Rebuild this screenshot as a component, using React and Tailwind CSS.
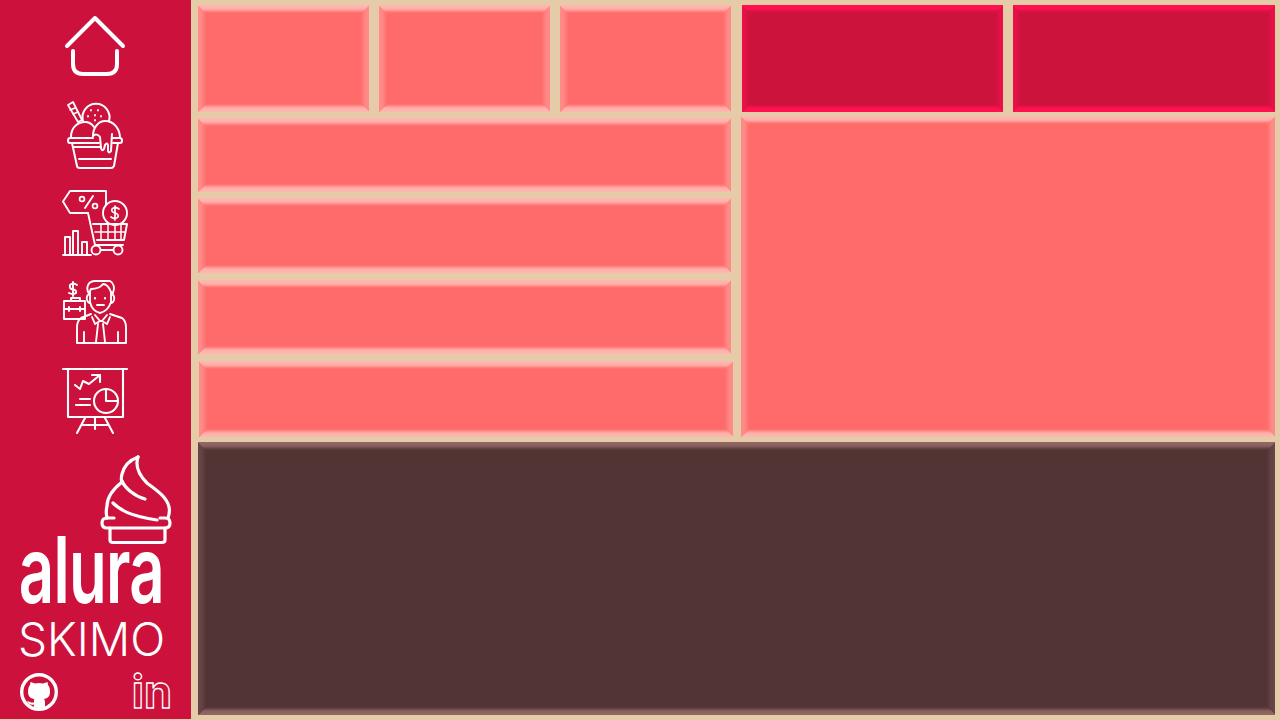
const light = "bg-[#ff6b6b] shadow-[inset_0_1px_0_#ffb6af,inset_1px_0_0_#ff8c8a,inset_0_-1px_0_#ffb6af,inset_-1px_0_0_#ff8c8a,inset_0_2px_0_#ffb5ae,inset_2px_0_0_#ff8b89,inset_0_-2px_0_#ffb5ae,inset_-2px_0_0_#ff8b89,inset_0_3px_0_#ffb3ac,inset_3px_0_0_#ff8987,inset_0_-3px_0_#ffb3ac,inset_-3px_0_0_#ff8987,inset_0_4px_0_#ffafa9,inset_4px_0_0_#ff8785,inset_0_-4px_0_#ffafa9,inset_-4px_0_0_#ff8785,inset_0_5px_0_#ffa8a2,inset_5px_0_0_#ff8381,inset_0_-5px_0_#ffa8a2,inset_-5px_0_0_#ff8381,inset_0_6px_0_#ff9591,inset_6px_0_0_#ff7c7b,inset_0_-6px_0_#ff9591,inset_-6px_0_0_#ff7c7b,inset_0_7px_0_#ff827f,inset_7px_0_0_#ff7675,inset_0_-7px_0_#ff827f,inset_-7px_0_0_#ff7675,inset_0_8px_0_#ff7473,inset_8px_0_0_#ff7170,inset_0_-8px_0_#ff7473,inset_-8px_0_0_#ff7170]";
const pink = "bg-[#cb133b] shadow-[inset_0_1px_0_#ff1150,inset_1px_0_0_#e81148,inset_0_-1px_0_#ff1150,inset_-1px_0_0_#e81148,inset_0_2px_0_#ff1150,inset_2px_0_0_#e81148,inset_0_-2px_0_#ff1150,inset_-2px_0_0_#e81148,inset_0_3px_0_#ff1150,inset_3px_0_0_#e61147,inset_0_-3px_0_#ff1150,inset_-3px_0_0_#e61147,inset_0_4px_0_#fd1150,inset_4px_0_0_#e21146,inset_0_-4px_0_#fd1150,inset_-4px_0_0_#e21146,inset_0_5px_0_#f4114c,inset_5px_0_0_#dc1244,inset_0_-5px_0_#f4114c,inset_-5px_0_0_#dc1244,inset_0_6px_0_#e61146,inset_6px_0_0_#d71241,inset_0_-6px_0_#e61146,inset_-6px_0_0_#d71241,inset_0_7px_0_#da1242,inset_7px_0_0_#d2123f,inset_0_-7px_0_#da1242,inset_-7px_0_0_#d2123f,inset_0_8px_0_#d0123e,inset_8px_0_0_#ce133d,inset_0_-8px_0_#d0123e,inset_-8px_0_0_#ce133d]";
const dark = "bg-[#523434] shadow-[inset_0_1px_0_#916765,inset_1px_0_0_#664646,inset_0_-1px_0_#916765,inset_-1px_0_0_#664646,inset_0_2px_0_#8f6562,inset_2px_0_0_#654545,inset_0_-2px_0_#8f6562,inset_-2px_0_0_#654545,inset_0_3px_0_#8d6361,inset_3px_0_0_#644444,inset_0_-3px_0_#8d6361,inset_-3px_0_0_#644444,inset_0_4px_0_#8a615e,inset_4px_0_0_#634343,inset_0_-4px_0_#8a615e,inset_-4px_0_0_#634343,inset_0_5px_0_#805959,inset_5px_0_0_#604141,inset_0_-5px_0_#805959,inset_-5px_0_0_#604141,inset_0_6px_0_#714d4d,inset_6px_0_0_#5c3e3e,inset_0_-6px_0_#714d4d,inset_-6px_0_0_#5c3e3e,inset_0_7px_0_#644242,inset_7px_0_0_#593a3a,inset_0_-7px_0_#644242,inset_-7px_0_0_#593a3a,inset_0_8px_0_#593a3a,inset_8px_0_0_#563737,inset_0_-8px_0_#593a3a,inset_-8px_0_0_#563737]";

const S = { fill: "none", stroke: "#fff", strokeLinecap: "round", strokeLinejoin: "round" };

function Home() {
  return (
    <svg width="80" height="70" viewBox="55 10 80 70" {...S} strokeWidth="4" className="block">
      <path d="M67 46 L95 18 L123 46" />
      <path d="M73 51 V64 Q73 74 83 74 H107 Q117 74 117 64 V51" />
    </svg>
  );
}
function IceCream() {
  return (
    <svg width="80" height="80" viewBox="55 95 80 80" {...S} strokeWidth="2" className="mt-[15px] block">
      <path d="M68 105 L73 102 L82 120 L78 122 Z" strokeWidth="1.8" />
      <path d="M70 110 L75 108 M73 114 L78 112" strokeWidth="1.5" />
      <path d="M83 121 A13.5 13.5 0 1 1 109 121" />
      <path d="M71 137 C71 128 77 122 85 122 C89 122 92 124 94 127" />
      <path d="M93 136 C93 127 99 121 105 121 C114 121 120 129 120 138" />
      <path d="M113 138 H120 Q122 138 122 140.5 Q122 143 120 143 H113" />
      <path d="M99 143 H70 Q68 143 68 140.5 Q68 138 70 138 H93" />
      <path d="M72 143 L77 166 Q77 168 80 168 H111 Q113 168 114 166 L118 143" />
      <path d="M79 159 H111 M74 147 H100" />
      <path d="M93 136 C95 134 98 134 100 137 L101 148 Q102 152 104 149 L105 145 Q107 142 108 145 V151 Q109 154 111 151 L112 134" />
      <path d="M91 110 V110.5 M98 110 V110.5 M88 116 V116.5 M95 115 V115.5 M101 116 V116.5 M95 120 V120.5" strokeWidth="1.8" />
    </svg>
  );
}
function Cart() {
  return (
    <svg width="80" height="75" viewBox="55 185 80 75" {...S} strokeWidth="1.9" className="mt-[10px] block">
      <path d="M88 213 H70 L63 201.5 L70 191 H106 V204" />
      <path d="M93 196 L85 208" strokeWidth="1.9" />
      <circle cx="82" cy="199" r="2.4" strokeWidth="1.7" />
      <circle cx="95" cy="206" r="2.4" strokeWidth="1.7" />
      <circle cx="115" cy="213" r="12" />
      <path d="M119 209 Q115 206 112 209 Q111 212 115 213 Q119 214 118 217 Q115 220 111 217 M115 206 V220" strokeWidth="1.7" />
      <path d="M88 213 L95 245 H123" />
      <path d="M93 224 H127 L124 240 H97" />
      <path d="M95 232 H125 M101 224 V240 M108 224 V240 M115 224 V240 M121 224 V240" strokeWidth="1.5" />
      <circle cx="96" cy="250" r="4.5" />
      <circle cx="118" cy="250" r="4.5" />
      <path d="M63 255 H91 M101 250 H113" />
      <path d="M65 254 V237 H70 V254 M73 254 V231 H78 V254 M82 254 V242 H87 V254" />
    </svg>
  );
}
function Man() {
  return (
    <svg width="80" height="75" viewBox="55 275 80 75" {...S} strokeWidth="1.9" className="mt-[15px] block">
      <path d="M73 282 V296 M77 285 Q73 282 70 285 Q69 289 73 289.5 Q77 290 76 293 Q73 295 69 293" strokeWidth="1.9" />
      <path d="M64 301 H85 V319 H64 Z M64 309 H85 M71 301 V298 H80 V301 M69 307 V311 M80 307 V311" />
      <path d="M88 292 C86 286 89 281 95 281 L110 281 C114 283 115 288 113 293 L111 292 C109 287 106 284 103 284 C100 288 94 289 91 289 L89 293 Z" />
      <path d="M90 292 V302 Q92 311 100 313 Q108 311 111 302 V292" />
      <path d="M89 294 Q86 296 87 300 Q88 303 90 303 M112 294 Q115 296 114 300 Q113 303 111 303" />
      <path d="M97 305 H104" />
      <path d="M95 298 V298.5 M105 298 V298.5" strokeWidth="2.2" />
      <path d="M91 314 L81 318 Q77 321 77 327 V343 H126 V327 Q126 321 122 318 L110 314" />
      <path d="M95 315 L100 321 L95 324 L92 317 M107 315 L102 321 L107 324 L110 317 M100 321 H102" />
      <path d="M98 324 L96 342 M103 324 L105 342" />
      <path d="M84 332 V343 M118 332 V343" />
    </svg>
  );
}
function Board() {
  return (
    <svg width="80" height="75" viewBox="55 362 80 75" {...S} strokeWidth="2.1" className="mt-[12px] block">
      <path d="M63 369 H127" />
      <path d="M68 370 V417 H123 V370" />
      <path d="M75 385 L80 389 L83 381 L89 384 L100 375" />
      <path d="M92 375 H100 V382" />
      <path d="M80 399 H90 M76 405 H90" />
      <circle cx="106" cy="401" r="12" />
      <path d="M106 389 V401 H118" />
      <path d="M85 418 L77 433 M105 418 L113 433 M95 418 V429 M83 425 H108" />
    </svg>
  );
}
function Cone() {
  return (
    <svg width="80" height="96" viewBox="100 452 80 96" {...S} strokeWidth="3.2" className="block ml-[45px] mt-[15px]">
      <path d="M138 457 C130 460 124 466 122 474 C121 478 121 480 122 482 C112 490 107 498 107 506 C106 510 106 514 107 518" />
      <path d="M122 481 C125 488 134 496 145 499" />
      <path d="M113 503 C120 510 130 516 157 520" />
      <path d="M138 457 C135 466 138 474 147 483 C156 490 167 497 169 507 C170 511 169 515 168 518" />
      <path d="M114 518 H107 Q102 518 102 523 Q102 528 107 528 H165 Q170 528 170 523 Q170 518 165 518 H160" />
      <path d="M110 528 V540 Q110 542.5 113 542.5 H162 Q165 542.5 165 540 V528" />
    </svg>
  );
}
function Github() {
  return (
    <svg width="40" height="40" viewBox="0 0 40 40" className="block">
      <circle cx="20" cy="20" r="17.3" fill="none" stroke="#fff" strokeWidth="3.4" />
      <path fill="#fff" d="M9 20 Q9 15 11 13 L11.5 10 L16 11.5 Q20 10.5 24 11.5 L28.5 10 L29 13 Q31 15 31 20 Q31 26 25 27 Q26 28 26 30 V35 Q20 37 15 35 V32.5 Q10 33.5 8 29 Q11 29.5 12 30.5 L15 30.5 V29 Q15 28 15 27 Q9 26 9 20 Z" />
    </svg>
  );
}

export default function App() {
  return (
    <div className="flex w-[1280px] h-[720px] overflow-hidden bg-[#e5cba7] font-['Inter',sans-serif]">
      <aside className="flex flex-col w-[191px] h-[719px] bg-[#cc123c] pl-[55px] pt-[10px] shrink-0">
        <Home />
        <IceCream />
        <Cart />
        <Man />
        <Board />
        <Cone />
        <div className="-ml-[35px] w-[143px] h-[72px] -mt-[14px] flex justify-center">
          <span className="text-white font-semibold text-[92px] leading-[72px] tracking-[-1px] scale-x-[0.67] origin-center">alura</span>
        </div>
        <div className="-ml-[35px] w-[143px] mt-[8px] h-[50px] flex justify-center">
          <span className="text-white font-light text-[46px] leading-[50px] whitespace-nowrap">SKIMO</span>
        </div>
        <div className="-ml-[36px] w-[160px] mt-[8px] flex justify-between items-center">
          <Github />
          <span className="text-transparent font-bold text-[45px] leading-[40px] mr-[7px] [-webkit-text-stroke:1.3px_white]">in</span>
        </div>
      </aside>
      <main className="flex flex-col w-[1089px] pl-[7px] pr-[5px] pt-[5px]">
        <div className="flex h-[107px]">
          <div className={`${light} w-[171px]`} />
          <div className={`${light} w-[171px] ml-[10px]`} />
          <div className={`${light} w-[171px] ml-[10px]`} />
          <div className={`${pink} w-[261px] ml-[11px]`} />
          <div className={`${pink} w-[262px] ml-[10px]`} />
        </div>
        <div className="flex h-[330px]">
          <div className="flex flex-col w-[535px] pt-[6px]">
            <div className={`${light} h-[74px] w-[533px]`} />
            <div className={`${light} h-[75px] w-[533px] mt-[6px]`} />
            <div className={`${light} h-[74px] w-[533px] mt-[7px]`} />
            <div className={`${light} h-[76px] w-[534px] ml-px mt-[7px]`} />
          </div>
          <div className={`${light} w-[534px] ml-[8px] mt-[4px] h-[321px]`} />
        </div>
        <div className={`${dark} h-[273px]`} />
      </main>
    </div>
  );
}
